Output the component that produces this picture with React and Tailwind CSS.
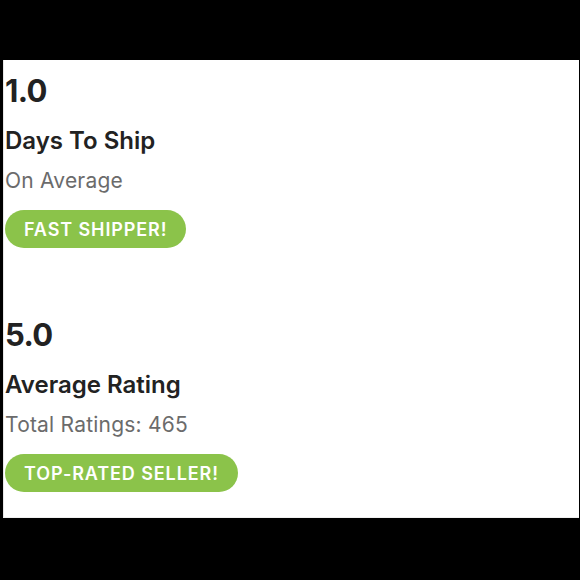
import React from "react";

const stats = [
  { value: "1.0", title: "Days To Ship", sub: "On Average", badge: "FAST SHIPPER!" },
  { value: "5.0", title: "Average Rating", sub: "Total Ratings: 465", badge: "TOP-RATED SELLER!" },
];

export default function App() {
  return (
    <div className="w-[580px] h-[580px] bg-black flex flex-col overflow-hidden" style={{ fontFamily: "Inter, 'Open Sans', sans-serif" }}>
      <div className="h-[60px] shrink-0" />
      <div className="h-[458px] shrink-0 overflow-hidden bg-white border-l border-l-[#e6e6e6] ml-[3px] mr-[1px] border-b border-b-[#f0f0f0] pl-[1px] pt-[11px]">
        {stats.map((s) => (
          <div key={s.value} className="h-[244px]">
            <div className="text-[31px] font-bold leading-[40px] tracking-[-0.02em] text-[#222]">{s.value}</div>
            <div className="mt-[15px] text-[24px] font-semibold leading-[30px] text-[#222]">{s.title}</div>
            <div className="mt-[11px] text-[21px] leading-[28px] tracking-[0.01em] text-[#6b6b6b]">{s.sub}</div>
            <div className="mt-[15px] inline-flex items-center h-[38px] px-[19px] rounded-full bg-[#8bc34a] text-white text-[18px] font-semibold tracking-[0.05em]">
              {s.badge}
            </div>
          </div>
        ))}
      </div>
      <div className="h-[62px] shrink-0" />
    </div>
  );
}
